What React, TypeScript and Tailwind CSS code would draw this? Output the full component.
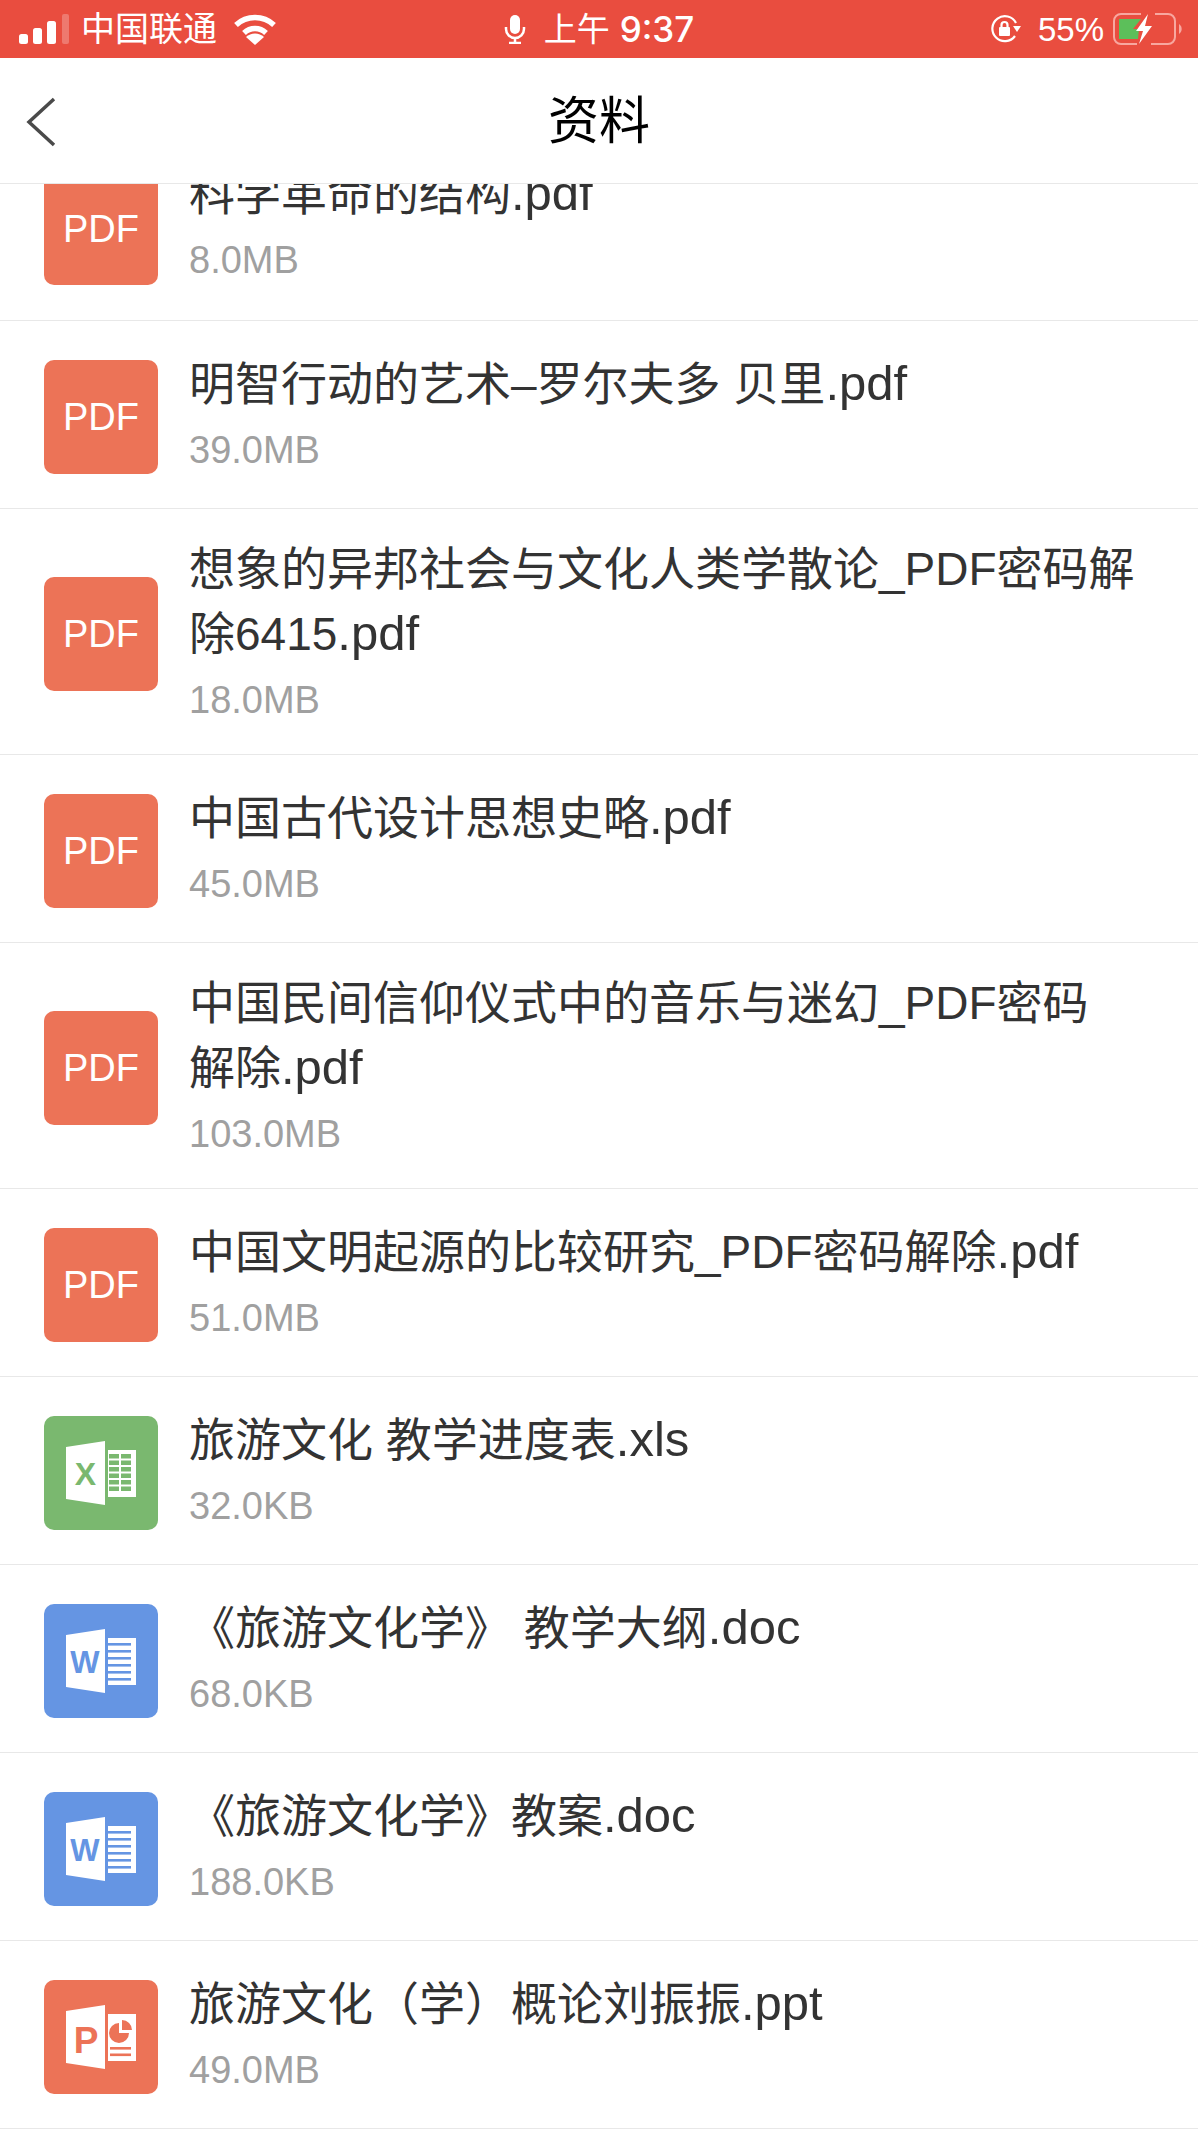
type FileKind = "pdf" | "xls" | "doc" | "ppt"

interface FileItem {
  name: string
  size: string
  kind: FileKind
}

const files: FileItem[] = [
  { name: "明智行动的艺术–罗尔夫多 贝里.pdf", size: "39.0MB", kind: "pdf" },
  { name: "想象的异邦社会与文化人类学散论_PDF密码解\n除6415.pdf", size: "18.0MB", kind: "pdf" },
  { name: "中国古代设计思想史略.pdf", size: "45.0MB", kind: "pdf" },
  { name: "中国民间信仰仪式中的音乐与迷幻_PDF密码\n解除.pdf", size: "103.0MB", kind: "pdf" },
  { name: "中国文明起源的比较研究_PDF密码解除.pdf", size: "51.0MB", kind: "pdf" },
  { name: "旅游文化 教学进度表.xls", size: "32.0KB", kind: "xls" },
  { name: "《旅游文化学》 教学大纲.doc", size: "68.0KB", kind: "doc" },
  { name: "《旅游文化学》教案.doc", size: "188.0KB", kind: "doc" },
  { name: "旅游文化（学）概论刘振振.ppt", size: "49.0MB", kind: "ppt" },
]

function OfficeIcon({ kind }: { kind: Exclude<FileKind, "pdf"> }) {
  const color = kind === "xls" ? "#7AB86F" : kind === "doc" ? "#6595E3" : "#EC7357"
  return (
    <svg width="114" height="114" viewBox="0 0 114 114" className="block">
      <rect width="114" height="114" rx="10" fill={color} />
      <path d="M22 31 L61 25 V89 L22 83 Z" fill="#fff" />
      <rect x="64" y="34" width="28" height="47" fill="#fff" />
      {kind === "xls" && (
        <>
          <text x="41.5" y="69" textAnchor="middle" fontFamily="Liberation Sans" fontWeight="700" fontSize="32" fill={color}>X</text>
          {[38, 44.5, 51, 57.5, 64, 70.5].map((y) => (
            <g key={y} fill={color}>
              <rect x="65" y={y} width="10" height="4.5" />
              <rect x="77" y={y} width="10" height="4.5" />
            </g>
          ))}
        </>
      )}
      {kind === "doc" && (
        <>
          <text x="41" y="69" textAnchor="middle" fontFamily="Liberation Sans" fontWeight="700" fontSize="31" fill={color}>W</text>
          {[39, 46, 53, 60, 67, 74].map((y) => (
            <rect key={y} x="64" y={y} width="23" height="2.6" fill={color} />
          ))}
        </>
      )}
      {kind === "ppt" && (
        <>
          <text x="42" y="73" textAnchor="middle" fontFamily="Liberation Sans" fontWeight="700" fontSize="37" fill={color}>P</text>
          <path d="M75 43 V53 H85 A10 10 0 1 1 75 43 Z" fill={color} />
          <path d="M78 40 A10 10 0 0 1 88 50 H78 Z" fill={color} />
          <rect x="66" y="67" width="21" height="2.6" fill={color} />
          <rect x="66" y="73.5" width="21" height="2.6" fill={color} />
        </>
      )}
    </svg>
  )
}

function FileIcon({ kind }: { kind: FileKind }) {
  if (kind !== "pdf") return <OfficeIcon kind={kind} />
  return (
    <div className="flex h-[114px] w-[114px] items-center justify-center rounded-[10px] bg-[#EC7357] pt-[2px] text-[38px] text-white">
      PDF
    </div>
  )
}

function FileText({ name, size }: { name: string; size: string }) {
  // the extension sits a bit larger than the rest of the name in the app
  const dot = name.lastIndexOf(".")
  return (
    <div className="min-w-0 flex-1">
      <div className="whitespace-pre text-[46px] leading-[65px] text-[#333333]">
        {name.slice(0, dot)}
        <span className="text-[49px] leading-none">{name.slice(dot)}</span>
      </div>
      <div className="mt-[8px] text-[38px] leading-[50px] text-[#a0a0a0]">{size}</div>
    </div>
  )
}

function FileRow({ item }: { item: FileItem }) {
  return (
    <div className="flex min-h-[188px] items-center gap-[31px] border-b border-[#e8e8e8] py-[27.5px] pl-[44px]">
      <div className="mt-[4px]">
        <FileIcon kind={item.kind} />
      </div>
      <div className="min-w-0 flex-1 pb-[2px]">
        <FileText name={item.name} size={item.size} />
      </div>
    </div>
  )
}

function StatusBar() {
  return (
    <div className="grid h-[58px] grid-cols-[1fr_auto_1fr] items-center bg-[#E94D3F] text-white">
      <div className="flex items-center pl-[19px]">
        <svg width="50" height="30" viewBox="0 0 50 30" fill="#fff">
          <rect x="0" y="20" width="9" height="10" rx="2.5" />
          <rect x="14" y="14" width="9" height="16" rx="2.5" />
          <rect x="28" y="7" width="9" height="23" rx="2.5" />
          <rect x="43" y="0" width="7" height="30" rx="2" opacity="0.25" />
        </svg>
        <span className="ml-[12px] text-[34px] leading-none">中国联通</span>
        <svg width="44" height="31" viewBox="0 0 44 31" className="ml-[16px]" fill="none" stroke="#fff" strokeWidth="5.5">
          <path d="M3 11 A28 28 0 0 1 41 11" />
          <path d="M11 19 A16 16 0 0 1 33 19" />
          <path d="M22 31 L13 23 A13 13 0 0 1 31 23 Z" fill="#fff" stroke="none" />
        </svg>
      </div>
      <div className="flex items-center">
        <svg width="22" height="30" viewBox="0 0 22 30" fill="none" stroke="#fff" strokeWidth="2.5">
          <rect x="6" y="1" width="10" height="19" rx="5" fill="#fff" stroke="none" />
          <path d="M2 13 V15 A9 9 0 0 0 20 15 V13 M11 24 V29 M5 29 H17" />
        </svg>
        <span className="ml-[18px] text-[33px] leading-none">上午</span>
        <span className="ml-[10px] text-[35px] font-medium leading-none [font-family:Inter,sans-serif]">9:37</span>
      </div>
      <div className="flex items-center justify-end pr-[14px]">
        <svg width="31" height="30" viewBox="0 0 31 30" fill="none" stroke="#fff" strokeWidth="2.2">
          <path d="M25 22 A12.5 12.5 0 1 1 26 9" />
          <path d="M23 12 H31 L27 18 Z" fill="#fff" stroke="none" />
          <rect x="9" y="13" width="11" height="9" rx="1" fill="#fff" stroke="none" />
          <path d="M11.5 13 V11 A3 3 0 0 1 17.5 11 V13" />
        </svg>
        <span className="ml-[17px] text-[33px] leading-none">55%</span>
        <svg width="71" height="32" viewBox="0 0 71 32" className="ml-[9px]" fill="none">
          <path d="M28 1 H8 A7 7 0 0 0 1 8 V24 A7 7 0 0 0 8 31 H24 M38 31 H55 A7 7 0 0 0 62 24 V8 A7 7 0 0 0 55 1 H42" stroke="#F8A79F" strokeWidth="2" />
          <path d="M6 6 H28 L20 16 H26 L25 26 H6 Z" fill="#5CBF5A" />
          <path d="M35 1 L23 18 H30 L26 31 L39 13 H32 Z" fill="#fff" />
          <path d="M66 11 A6 6 0 0 1 66 21 Z" fill="#F8A79F" />
        </svg>
      </div>
    </div>
  )
}

export default function App() {
  return (
    <div className="min-h-[2130px] bg-white [font-family:'Liberation_Sans','Noto_Sans_CJK_SC',sans-serif]">
      <StatusBar />
      <div className="relative flex h-[126px] items-center justify-center border-b border-[#e8e8e8]">
        <svg width="32" height="50" viewBox="0 0 32 50" className="absolute left-[25px] top-[39px]" fill="none" stroke="#4a4a4a" strokeWidth="3.5">
          <path d="M29 2 L4 25 L29 48" />
        </svg>
        <span className="pt-[2px] text-[51px] leading-none text-black">资料</span>
      </div>
      {/* first row is cut off by the nav bar */}
      <div className="flex h-[137px] items-end gap-[31px] overflow-hidden border-b border-[#e8e8e8] pb-[35px] pl-[44px]">
        <FileIcon kind="pdf" />
        <FileText name="科学革命的结构.pdf" size="8.0MB" />
      </div>
      {files.map((item) => (
        <FileRow key={item.name} item={item} />
      ))}
    </div>
  )
}
